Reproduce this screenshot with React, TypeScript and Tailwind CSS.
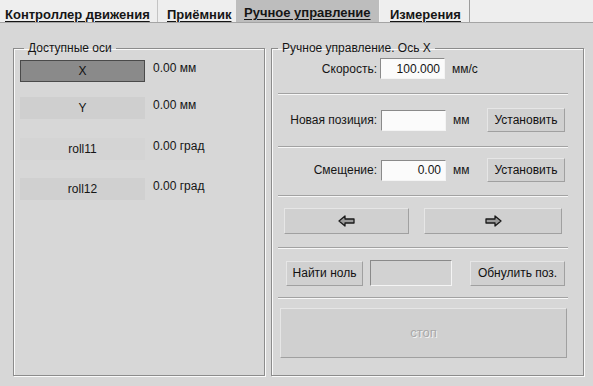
import React from "react"

const font = "font-['Liberation_Sans',Arial,sans-serif]"

function Sep() {
  return <div className="h-px w-[290px] bg-[#a2a2a2] shadow-[0_1px_0_#f7f7f7]" />
}

function Field({ value, w = "w-[65px]", disabled = false }: { value?: string; w?: string; disabled?: boolean }) {
  return (
    <div
      className={`${w} h-[21px] flex items-center justify-end pr-[4px] text-[12px] border border-t-[#8a8a8a] border-l-[#8a8a8a] border-b-[#f4f4f4] border-r-[#f4f4f4] ${
        disabled ? "bg-[#d2d2d2]" : "bg-[#fbfbfb]"
      }`}
    >
      {value}
    </div>
  )
}

function Btn({ children, className = "" }: { children?: React.ReactNode; className?: string }) {
  return (
    <div
      className={`flex items-center justify-center text-[12px] text-[#111] bg-[#d0d0d0] border border-t-[#e6e6e6] border-l-[#e6e6e6] border-b-[#a0a0a0] border-r-[#a0a0a0] ${className}`}
    >
      {children}
    </div>
  )
}

function Arrow({ dir }: { dir: "left" | "right" }) {
  return (
    <svg width="17" height="12" viewBox="0 0 17 12">
      <polygon
        points={dir === "left" ? "1,6 7,1 7,4 16,4 16,8 7,8 7,11" : "16,6 10,1 10,4 1,4 1,8 10,8 10,11"}
        fill="#9a9a9a"
        stroke="#1a1a1a"
        strokeWidth="1.3"
        strokeLinejoin="round"
      />
    </svg>
  )
}

const axes = [
  { name: "X", value: "0.00 мм", active: true, mt: "mt-[5px]", bar: "" },
  { name: "Y", value: "0.00 мм", active: false, mt: "mt-[15px]", bar: "bg-[#cfcfcf]" },
  { name: "roll11", value: "0.00 град", active: false, mt: "mt-[19px]", bar: "bg-[#d4d4d4]" },
  { name: "roll12", value: "0.00 град", active: false, mt: "mt-[18px]", bar: "bg-[#d0d0d0]" },
]

export default function App() {
  return (
    <div className={`w-[593px] h-[386px] bg-[#d7d7d7] text-[#151515] overflow-hidden ${font}`}>
      {/* tabs */}
      <div className="h-[23px] flex bg-[#eeeeee] border-b border-[#a4a4a4] text-[13px] font-bold">
        <div className="w-[158px] pl-[5px] pt-[5px] border-r border-[#c4c4c4]">
          <span className="underline underline-offset-2">Контроллер движения</span>
        </div>
        <div className="w-[78px] pl-[9px] pt-[5px]">
          <span className="underline underline-offset-2">Приёмник</span>
        </div>
        <div className="w-[144px] pl-[8px] pt-[3px] bg-[#bdbdbd] border-r border-[#f4f4f4]">
          <span className="underline underline-offset-2">Ручное управление</span>
        </div>
        <div className="w-[90px] pl-[10px] pt-[5px] border-r border-[#9c9c9c]">
          <span className="underline underline-offset-2">Измерения</span>
        </div>
      </div>

      <div className="flex gap-[6px] pl-[13px] pt-[18px]">
        {/* left group */}
        <fieldset className="w-[252px] h-[335px] border border-[#8c8c8c] shadow-[inset_1px_1px_0_#fafafa,1px_1px_0_#fafafa] px-[6px]">
          <legend className="ml-[4px] px-[4px] text-[12px] leading-[14px]">Доступные оси</legend>
          {axes.map((a) => (
            <div key={a.name} className={`flex ${a.mt}`}>
              <div
                className={`w-[125px] h-[22px] flex items-center justify-center text-[12px] ${
                  a.active ? "bg-[#8a8a8a] border border-[#4a4a4a] text-[#111]" : a.bar
                }`}
              >
                {a.name}
              </div>
              <div className="ml-[8px] pt-[1px] text-[12px] leading-[14px]">{a.value}</div>
            </div>
          ))}
        </fieldset>

        {/* right group */}
        <fieldset className="w-[313px] h-[335px] border border-[#8c8c8c] shadow-[inset_1px_1px_0_#fafafa,1px_1px_0_#fafafa] pl-[6px] pr-[15px]">
          <legend className="ml-0 px-[4px] text-[12px] leading-[14px]">Ручное управление. Ось X</legend>

          <div className="flex items-center h-[21px] mt-[3px] text-[12px]">
            <div className="w-[99px] text-right">Скорость:</div>
            <div className="ml-[3px]">
              <Field value="100.000" />
            </div>
            <div className="ml-[7px]">мм/с</div>
          </div>

          <div className="mt-[14px]">
            <Sep />
          </div>

          <div className="flex items-center h-[24px] mt-[14px] text-[12px]">
            <div className="w-[99px] text-right">Новая позиция:</div>
            <div className="ml-[4px]">
              <Field />
            </div>
            <div className="ml-[7px] w-[34px]">мм</div>
            <Btn className="w-[78px] h-[24px]">Установить</Btn>
          </div>

          <div className="mt-[14px]">
            <Sep />
          </div>

          <div className="flex items-center h-[24px] mt-[11px] text-[12px]">
            <div className="w-[99px] text-right">Смещение:</div>
            <div className="ml-[4px]">
              <Field value="0.00" />
            </div>
            <div className="ml-[7px] w-[34px]">мм</div>
            <Btn className="w-[78px] h-[24px]">Установить</Btn>
          </div>

          <div className="mt-[13px]">
            <Sep />
          </div>

          <div className="flex mt-[12px]">
            <Btn className="ml-[6px] w-[125px] h-[26px]">
              <Arrow dir="left" />
            </Btn>
            <Btn className="ml-[15px] w-[138px] h-[26px]">
              <Arrow dir="right" />
            </Btn>
          </div>

          <div className="mt-[13px]">
            <Sep />
          </div>

          <div className="flex items-center mt-[12px] h-[26px]">
            <Btn className="ml-[8px] w-[77px] h-[25px]">Найти ноль</Btn>
            <div className="ml-[7px]">
              <Field w="w-[82px] !h-[26px]" disabled />
            </div>
            <Btn className="ml-[18px] w-[95px] h-[25px]">Обнулить поз.</Btn>
          </div>

          <div className="mt-[11px]">
            <Sep />
          </div>

          <Btn className="mt-[10px] ml-[2px] w-[287px] h-[50px] !text-[13px] !text-[#a9a9a9] [text-shadow:1px_1px_0_#f2f2f2]">
            стоп
          </Btn>
        </fieldset>
      </div>
    </div>
  )
}
